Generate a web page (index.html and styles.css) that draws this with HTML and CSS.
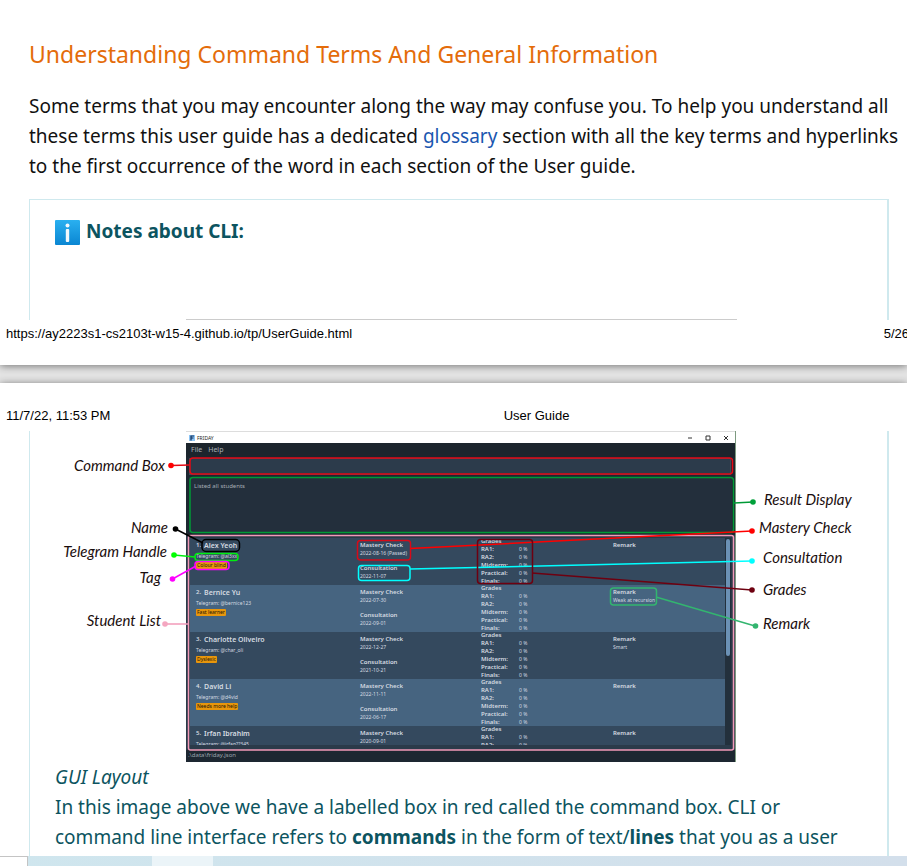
FILE: index.html
```html
<!DOCTYPE html>
<html lang="en">
<head>
<meta charset="utf-8">
<title>User Guide</title>
<link rel="stylesheet" href="styles.css">
</head>
<body>
<main class="viewer">
  <section class="page page-first">
    <div class="content">
      <h2 class="title">Understanding Command Terms And General Information</h2>
      <p class="intro">Some terms that you may encounter along the way may confuse you. To help you understand all<br>
      these terms this user guide has a dedicated <a href="#glossary">glossary</a> section with all the key terms and hyperlinks<br>
      to the first occurrence of the word in each section of the User guide.</p>
      <div class="note note-top">
        <p class="note-title">
          <svg class="info" viewBox="0 0 25 25" aria-hidden="true">
            <defs><linearGradient id="blue" x1="0" y1="0" x2="0" y2="1"><stop offset="0" stop-color="#2ab0f0"/><stop offset="1" stop-color="#0a86d2"/></linearGradient></defs>
            <rect width="25" height="25" rx="1" fill="url(#blue)"/>
            <circle cx="12.500" cy="5.500" r="2" fill="#f2f8fc"/>
            <rect x="10.800" y="9" width="3.400" height="13" rx="1" fill="#f2f8fc"/>
          </svg>
          <strong>Notes about CLI:</strong>
        </p>
        <div class="sliver"></div>
      </div>
    </div>
    <footer class="running footer"><span>https://ay2223s1-cs2103t-w15-4.github.io/tp/UserGuide.html</span><span>5/26</span></footer>
  </section>

  <section class="page page-second">
    <header class="running header"><span>11/7/22, 11:53 PM</span><span class="center">User Guide</span><span></span></header>
    <div class="content">
      <div class="note note-rest">
        <figure class="figure">
          <div class="app">
            <div class="titlebar">
              <svg class="logo" viewBox="0 0 6 6" aria-hidden="true"><rect width="6" height="6" fill="#8cc4f4"/><path d="M2 5.500V1h3M2 3h2.500" stroke="#12305c" stroke-width="1.200" fill="none"/></svg>
              <span>FRIDAY</span>
              <div class="controls">
                <button aria-label="Minimize"><svg viewBox="0 0 6 6"><path d="M1 3h4"/></svg></button>
                <button aria-label="Maximize"><svg viewBox="0 0 6 6"><path d="M1 1h4v4h-4z"/></svg></button>
                <button aria-label="Close"><svg viewBox="0 0 6 6"><path d="M1 1l4 4M5 1l-4 4"/></svg></button>
              </div>
            </div>
            <nav class="menu"><button>File</button><button>Help</button></nav>
            <input class="command" type="text" aria-label="Command Box">
            <div class="result">Listed all students</div>
            <div class="listing">
              <ul class="students">
                <li class="student">
                  <div class="who"><h3><small>1.</small>Alex Yeoh</h3><p>Telegram: @al3xx</p><span class="tag">Colour blind</span></div>
                  <div class="dates"><b>Mastery Check</b><span>2022-08-16 (Passed)</span><b class="second">Consultation</b><span>2022-11-07</span></div>
                  <div class="grades"><b>Grades</b><i></i><b>RA1:</b><span>0 %</span><b>RA2:</b><span>0 %</span><b>Midterm:</b><span>0 %</span><b>Practical:</b><span>0 %</span><b>Finals:</b><span>0 %</span></div>
                  <div class="dates"><b>Remark</b></div>
                </li>
                <li class="student">
                  <div class="who"><h3><small>2.</small>Bernice Yu</h3><p>Telegram: @bernice123</p><span class="tag">Fast learner</span></div>
                  <div class="dates"><b>Mastery Check</b><span>2022-07-30</span><b class="second">Consultation</b><span>2022-09-01</span></div>
                  <div class="grades"><b>Grades</b><i></i><b>RA1:</b><span>0 %</span><b>RA2:</b><span>0 %</span><b>Midterm:</b><span>0 %</span><b>Practical:</b><span>0 %</span><b>Finals:</b><span>0 %</span></div>
                  <div class="dates"><b>Remark</b><span>Weak at recursion</span></div>
                </li>
                <li class="student">
                  <div class="who"><h3><small>3.</small>Charlotte Oliveiro</h3><p>Telegram: @char_oli</p><span class="tag">Dyslexic</span></div>
                  <div class="dates"><b>Mastery Check</b><span>2022-12-27</span><b class="second">Consultation</b><span>2021-10-21</span></div>
                  <div class="grades"><b>Grades</b><i></i><b>RA1:</b><span>0 %</span><b>RA2:</b><span>0 %</span><b>Midterm:</b><span>0 %</span><b>Practical:</b><span>0 %</span><b>Finals:</b><span>0 %</span></div>
                  <div class="dates"><b>Remark</b><span>Smart</span></div>
                </li>
                <li class="student">
                  <div class="who"><h3><small>4.</small>David Li</h3><p>Telegram: @d4vid</p><span class="tag">Needs more help</span></div>
                  <div class="dates"><b>Mastery Check</b><span>2022-11-11</span><b class="second">Consultation</b><span>2022-06-17</span></div>
                  <div class="grades"><b>Grades</b><i></i><b>RA1:</b><span>0 %</span><b>RA2:</b><span>0 %</span><b>Midterm:</b><span>0 %</span><b>Practical:</b><span>0 %</span><b>Finals:</b><span>0 %</span></div>
                  <div class="dates"><b>Remark</b></div>
                </li>
                <li class="student">
                  <div class="who"><h3><small>5.</small>Irfan Ibrahim</h3><p>Telegram: @irfan??345</p></div>
                  <div class="dates"><b>Mastery Check</b><span>2020-09-01</span></div>
                  <div class="grades"><b>Grades</b><i></i><b>RA1:</b><span>0 %</span><b>RA2:</b><span>0 %</span></div>
                  <div class="dates"><b>Remark</b></div>
                </li>
              </ul>
              <div class="scrollbar"><div class="thumb"></div></div>
            </div>
            <div class="status">.\data\friday.json</div>
          </div>
          <svg class="callouts" viewBox="55 431 806 332">
            <g fill="none" stroke-width="1.500">
              <g stroke="#e50914"><path d="M171 465.500L190 465"/><rect x="190" y="458" width="542.500" height="16" rx="3"/></g>
              <g stroke="#009a36"><path d="M734 503L753 502"/><rect x="190" y="477.500" width="543.500" height="55" rx="3"/></g>
              <g stroke="#f29ab8"><path d="M165 624L188 624"/><rect x="188.500" y="535.500" width="545" height="214.500" rx="2"/></g>
              <g stroke="#000"><path d="M175.500 529L203 543"/><rect x="202" y="539.500" width="37.500" height="12" rx="4"/></g>
              <g stroke="#0e1"><path d="M174 555L195 557"/><rect x="195" y="553.500" width="43" height="7" rx="3"/></g>
              <g stroke="#f0f"><path d="M172.500 579L196 566"/><rect x="195" y="561.500" width="34" height="8" rx="3"/></g>
              <g stroke="red"><path d="M410 548.500L752 531"/><rect x="357.500" y="540.500" width="53" height="19.500" rx="3" stroke="#d80a18"/></g>
              <g stroke="#0ff"><path d="M410 569L752 561"/><rect x="358.500" y="565.500" width="51.500" height="15" rx="3"/></g>
              <g stroke="#6e0010"><path d="M532 573L752 590"/><rect x="477.500" y="539.500" width="55" height="44" rx="3"/></g>
              <g stroke="#33b56f"><path d="M656 597L755 626"/><rect x="610.500" y="588" width="46" height="17" rx="3"/></g>
            </g>
            <circle cx="171" cy="465.500" r="2.800" fill="red"/>
            <circle cx="175.500" cy="529" r="2.800"/>
            <circle cx="174" cy="555" r="2.800" fill="#0f0"/>
            <circle cx="172.500" cy="579" r="2.800" fill="#f0f"/>
            <circle cx="165" cy="624" r="2.800" fill="#f4a6c0"/>
            <circle cx="753" cy="502" r="2.800" fill="#00a03a"/>
            <circle cx="752" cy="531" r="2.800" fill="red"/>
            <circle cx="752" cy="561" r="2.800" fill="#0ff"/>
            <circle cx="752" cy="590" r="2.800" fill="#6e0010"/>
            <circle cx="755.500" cy="626" r="2.800" fill="#33b56f"/>
            <g class="label" text-anchor="end">
              <text x="165" y="471">Command Box</text>
              <text x="168" y="533">Name</text>
              <text x="167" y="557">Telegram Handle</text>
              <text x="161" y="583">Tag</text>
              <text x="161" y="626">Student List</text>
            </g>
            <g class="label">
              <text x="764" y="505">Result Display</text>
              <text x="759" y="533">Mastery Check</text>
              <text x="763" y="563">Consultation</text>
              <text x="763" y="595">Grades</text>
              <text x="763" y="629">Remark</text>
            </g>
          </svg>
        </figure>
        <p class="body"><em>GUI Layout</em><br>
        In this image above we have a labelled box in red called the command box. CLI or<br>
        command line interface refers to <strong>commands</strong> in the form of text/<strong>lines</strong> that you as a user</p>
      </div>
    </div>
  </section>
</main>
<div class="taskbar"><div class="corner"></div><div class="task"></div></div>
</body>
</html>
```

FILE: styles.css
```css
* { box-sizing: border-box; }
body {
  margin: 0;
  overflow: hidden;
  background: #e5e5e5;
  font-family: "Noto Sans", "Open Sans", sans-serif;
  color: #111;
}
h2, h3, p, ul, figure { margin: 0; padding: 0; }
button { border: 0; padding: 0; background: none; color: inherit; font: inherit; }
.viewer { display: flex; flex-direction: column; gap: 18px; background: #e5e5e5; }
.page { background: #fff; box-shadow: 0 1px 8px rgba(0, 0, 0, .5); }
.content { padding: 0 18px 0 29px; }
.page-first .content { padding-top: 36px; }
.title { font-size: 23px; line-height: 36px; font-weight: 400; color: #e46c0a; white-space: nowrap; }
.intro { margin: 19px 0 18px; font-size: 19px; line-height: 30px; white-space: nowrap; }
.intro a { color: #1a56b0; text-decoration: none; }
.note { border: solid #cfe9ee; border-width: 1px 2px 0 1px; padding: 0 25px; color: #0c5460; }
.note-top { padding-top: 16px; min-height: 121px; display: flex; flex-direction: column; justify-content: space-between; }
.note-title { display: flex; align-items: center; gap: 6px; font-size: 19px; line-height: 30px; }
.info { width: 25px; height: 25px; margin-top: 3px; }
.sliver { height: 1px; margin: 0 125px 0 131px; background: #ccc; }
.running { display: flex; justify-content: space-between; font-family: "Liberation Sans", sans-serif; font-size: 13px; color: #000; }
.footer { padding: 6px 0 24px 6px; line-height: 15px; margin-right: -2px; }
.header { display: grid; grid-template-columns: 1fr auto 1fr; padding: 25px 0 7px 6px; line-height: 16px; margin-right: -160px; }
.note-rest { border-top: 0; }
.figure { position: relative; padding-left: 131px; }
.callouts { position: absolute; top: 0; left: 0; width: 806px; height: 332px; overflow: visible; }
.label { font-family: Lato, sans-serif; font-style: italic; font-size: 15px; fill: #1a0d0d; }
.body { font-size: 19px; line-height: 30px; white-space: nowrap; padding-bottom: 4px; }

.app { width: 550px; background: #1d2731; color: #d5dbe1; font-size: 6px; border-right: 1px solid #7d9a80; }
.titlebar { display: flex; align-items: center; gap: 2px; height: 12px; padding: 0 6px 0 3px; background: #fff; border-top: 1px solid #ddd; color: #222; font-size: 5px; }
.logo { width: 6px; height: 6px; }
.controls { display: flex; gap: 12px; margin-left: auto; }
.controls button { width: 6px; height: 6px; line-height: 0; }
.controls svg { width: 6px; height: 6px; fill: none; stroke: #333; stroke-width: 1; }
.menu { display: flex; gap: 6px; height: 14px; padding-left: 5px; background: #1c252d; color: #aab2b9; font-size: 7px; line-height: 14px; }
.command { display: block; width: calc(100% - 7px); height: 17px; margin: 1px 3px 2px; border: 1px solid #3d4c5a; background: #2c3b4b; color: #fff; font-size: 6px; }
.result { height: 56px; margin: 0 3px 2px; padding: 4px 5px; background: #232f3c; color: #a5adb5; line-height: 10px; }
.listing { display: flex; height: 215px; padding: 3px 4px 5px; background: #2b3a49; }
.students { flex: 1; list-style: none; overflow: hidden; }
.student { display: grid; grid-template-columns: 170px 121px 132px 1fr; height: 47px; background: #34495e; }
.student:nth-child(even) { background: #466480; }
.who { padding: 2px 0 0 6px; }
.who h3 { display: flex; align-items: center; gap: 3px; font-size: 7px; line-height: 11px; font-weight: 600; }
.who small { font-size: 6px; }
.who p { font-size: 5px; line-height: 11px; }
.tag { display: block; width: fit-content; padding: 0 1px; border-radius: 1px; background: #e8960c; color: #1a1408; font-size: 5px; line-height: 7px; }
.dates { display: flex; flex-direction: column; padding-top: 4px; font-size: 5px; line-height: 8px; }
.dates b { font-size: 6px; line-height: 7px; font-weight: 600; }
.dates .second { margin-top: 8px; }
.grades { display: grid; grid-template: repeat(6, 1fr) / 38px 1fr; height: 47px; align-items: center; font-size: 5px; line-height: 7px; }
.grades b { font-size: 6px; font-weight: 600; }
.scrollbar { width: 6px; background: #23303c; padding: 1px; }
.thumb { height: 117px; border-radius: 2px; background: #6b91b5; }
.status { height: 12px; padding-left: 2px; font-size: 6px; line-height: 10px; color: #9aa3ab; }

.taskbar { display: flex; height: 10px; background: linear-gradient(90deg, #cfe6ee, #d3dfeb); position: relative; }
.corner { width: 28px; background: #fff; border-top: 1px solid #c4c4c4; border-right: 1px solid #c4c4c4; }
.task { width: 61px; margin-left: 124px; background: #ebf4f8; }
```
